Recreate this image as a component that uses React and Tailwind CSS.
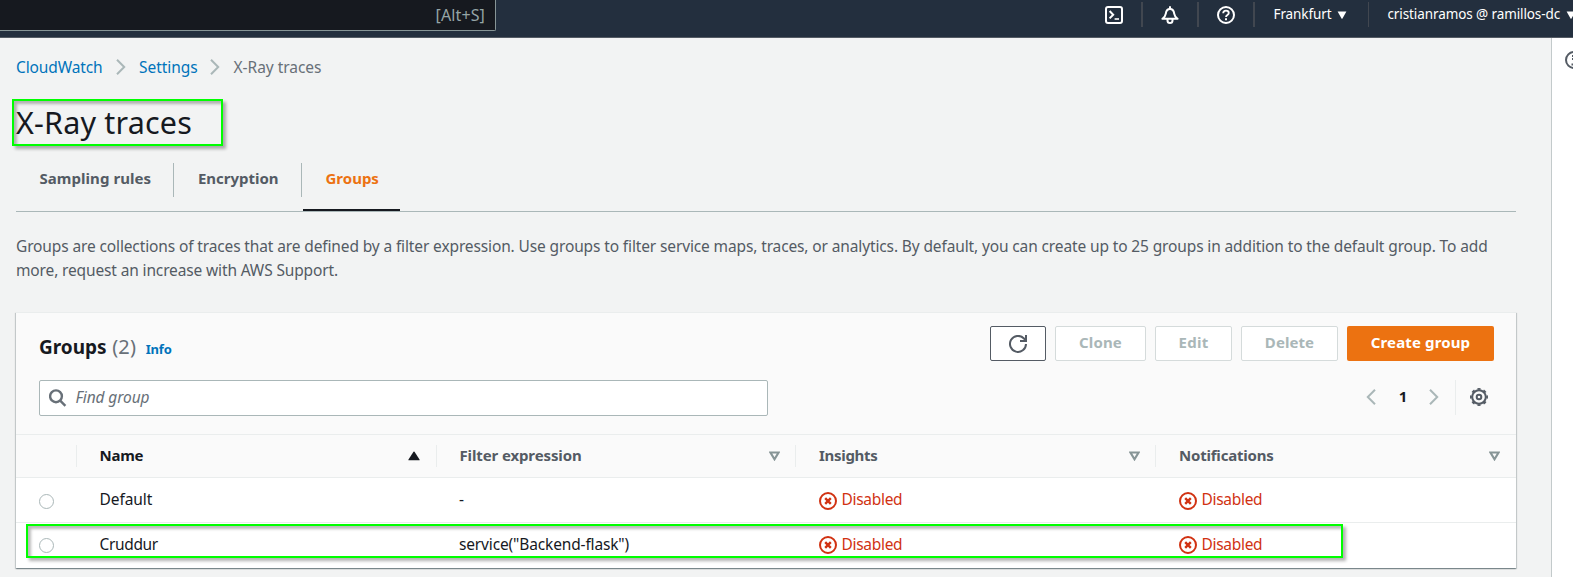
import React from 'react';

function Caret({ className = '' }) {
  return (
    <svg viewBox="0 0 10 8" className={`h-2 w-2.5 shrink-0 ${className}`}>
      <path d="M0.6 0.6h8.8L5.6 7.2a.7.7 0 0 1-1.2 0z" fill="#fff" />
    </svg>
  );
}

function Chevron({ left = false }) {
  return (
    <svg viewBox="0 0 10 16" className="h-4 w-2.5 shrink-0" fill="none" stroke="#aab7b8" strokeWidth="2">
      <path d={left ? 'M9 .8 1.8 8 9 15.2' : 'M1 .8 8.2 8 1 15.2'} />
    </svg>
  );
}

function NavDivider() {
  return <div className="h-[25px] w-[2px] bg-[#414750]" />;
}

function ErrorIcon() {
  return (
    <svg viewBox="0 0 18 18" className="h-[18px] w-[18px] shrink-0" fill="none" stroke="#d13212" strokeWidth="2">
      <circle cx="9" cy="9" r="8" />
      <path d="M6.2 6.2l5.6 5.6M11.8 6.2l-5.6 5.6" strokeWidth="2.4" />
    </svg>
  );
}

function SortIcon() {
  return (
    <svg viewBox="0 0 11 10" className="h-2.5 w-[11px] shrink-0" fill="none" stroke="#879596" strokeWidth="2.2">
      <path d="M1.4 1.5h8.2L5.5 8.2z" />
    </svg>
  );
}

function GearIcon({ className = '' }) {
  return (
    <svg viewBox="0 0 18 18" className={`h-[18px] w-[18px] ${className}`} fill="none" stroke="#545b64">
      <circle cx="9" cy="9" r="6.8" strokeWidth="2" />
      <circle cx="9" cy="9" r="8.1" strokeWidth="1.8" pathLength="80" strokeDasharray="5 5" strokeDashoffset="2.5" />
      <circle cx="9" cy="9" r="2.3" strokeWidth="2" />
    </svg>
  );
}

function TopNav() {
  return (
    <header className="flex h-[38px] items-start border-b border-[#545b64] bg-[#232f3e] text-white">
      <div className="flex h-[31px] w-[496px] shrink-0 items-center justify-end rounded-br-[2px] border-b border-r border-[#879596] bg-[#16191f] pr-[10px] text-[16px] tracking-[0.13px] text-[#95a5a6]">
        [Alt+S]
      </div>
      <div className="ml-[609px] flex items-start pt-[2px]">
        <svg viewBox="0 0 18 18" className="mr-[18px] mt-1 h-[18px] w-[18px]" fill="none" stroke="#fff" strokeWidth="2">
          <rect x="1" y="1" width="16" height="16" rx="2" />
          <path d="M4.6 5 8.2 8.7 4.6 12.4" />
          <path d="M9.6 13h4.4" strokeWidth="1.6" />
        </svg>
        <NavDivider />
        <svg viewBox="0 0 18 18" className="mx-[18px] mt-1 h-[18px] w-[18px]" fill="none" stroke="#fff" strokeWidth="2" strokeLinejoin="round">
          <path d="M1.4 12.8h15.2c-2.3-1.3-3-2.8-3.4-5.2C12.8 4.7 11.4 3 9 3S5.2 4.700 4.800 7.600c-.4 2.400-1.100 3.900-3.400 5.200z" />
          <path d="M9 .2V3M6.500 13v1.400a2.500 2.500 0 0 0 5 0V13" />
        </svg>
        <NavDivider />
        <svg viewBox="0 0 18 18" className="mx-[18px] mt-1 h-[18px] w-[18px]" fill="none" stroke="#fff" strokeWidth="2">
          <circle cx="9" cy="9" r="8" />
          <path d="M6.200 7.300C6.200 5.500 7.400 4.600 9 4.600s2.800 1 2.800 2.400c0 2-2.800 2-2.800 4" strokeWidth="1.800" />
          <path d="M9 12.300v2" />
        </svg>
        <NavDivider />
        <div className="ml-[18.500px] flex h-[24px] items-center text-[13.500px] tracking-[-0.100px]">
          Frankfurt
          <Caret className="ml-[6px] mt-px" />
        </div>
        <div className="ml-[21px] h-[25px] w-px bg-[#414750]" />
        <div className="ml-[18px] flex h-[24px] items-center whitespace-nowrap text-[13.500px] tracking-[-0.100px]">
          cristianramos @ ramillos-dc
          <Caret className="ml-[6px] mt-px" />
        </div>
      </div>
    </header>
  );
}

function Breadcrumbs() {
  return (
    <nav className="flex h-6 items-center text-[15.500px] text-[#0073bb]">
      <span className="w-[87px] pt-[2px] tracking-[-0.120px]">CloudWatch</span>
      <span className="mx-[13px] flex"><Chevron /></span>
      <span className="w-[58px] pt-[2px] tracking-[-0.060px]">Settings</span>
      <span className="mx-[13px] flex"><Chevron /></span>
      <span className="ml-[0.500px] pt-[2px] tracking-[-0.030px] text-[#687078]">X-Ray traces</span>
    </nav>
  );
}

function Tabs() {
  return (
    <div className="flex h-[49px] border-b border-[#aab7b8] text-[15px] font-bold text-[#545b64]">
      <div className="h-[34px] w-[158px] border-r border-[#aab7b8] pl-[23.500px] leading-[31px] tracking-[0.050px]">Sampling rules</div>
      <div className="h-[34px] w-[128px] border-r border-[#aab7b8] pl-[24px] leading-[31px] tracking-[-0.030px]">Encryption</div>
      <div className="ml-px h-[48px] w-[97px] border-b-2 border-[#16191f] pl-[22.500px] leading-[31px] text-[#ec7211]">Groups</div>
    </div>
  );
}

function GhostButton({ className, children }) {
  return (
    <button className={`flex h-[35px] items-center justify-center rounded-[2px] border border-[#d5dbdb] bg-white pb-[3px] text-[15px] font-bold text-[#aab7b8] ${className}`}>
      {children}
    </button>
  );
}

const COLS = 'grid grid-cols-[61px_360px_359px_360px_360px]';

function HeaderCell({ label, tracking, active = false, last = false }) {
  return (
    <div className={`flex h-[22px] items-center justify-between pl-[22.500px] ${last ? 'pr-4' : 'border-r border-[#eaeded] pr-[15px]'} ${active ? 'text-[#16191f]' : 'text-[#545b64]'}`}>
      <span className={`pb-[2px] ${tracking}`}>{label}</span>
      {active ? (
        <svg viewBox="0 0 12 10" className="mr-px h-2.5 w-3 shrink-0">
          <path d="M5.500.800a.6.6 0 0 1 1 0l5 7.600a.6.6 0 0 1-.5.900H1a.6.6 0 0 1-.5-.900z" fill="#16191f" />
        </svg>
      ) : (
        <SortIcon />
      )}
    </div>
  );
}

function Status() {
  return (
    <div className="flex items-center pl-[22.500px] tracking-[-0.300px] text-[#d13212]">
      <span className="mr-[5px] mt-px flex"><ErrorIcon /></span>
      <span>Disabled</span>
    </div>
  );
}

function Row({ name, nameTracking, filter, className }) {
  return (
    <div className={`${COLS} text-[15.500px] text-[#16191f] ${className}`}>
      <div className="flex items-center pl-[23px]">
        <span className="mt-[2px] h-[15px] w-[15px] rounded-full border border-[#aab7b8] bg-white" />
      </div>
      <div className={`flex items-center pl-[22.500px] ${nameTracking}`}>{name}</div>
      <div className="flex items-center pl-[22px] tracking-[-0.150px]">{filter}</div>
      <Status />
      <Status />
    </div>
  );
}

function GroupsPanel() {
  return (
    <section className="mt-[30px] h-[256px] w-[1500px] shrink-0 border-t border-[#eaeded] bg-white shadow-[0_1px_1px_0_rgba(0,28,36,0.3),1px_1px_1px_0_rgba(0,28,36,0.15),-1px_1px_1px_0_rgba(0,28,36,0.15)]">
      <div className="h-[122px] border-b border-[#eaeded] bg-[#fafafa] pl-[23px] pr-[22px] pt-[13px]">
        <div className="flex h-[35px]">
          <div className="flex flex-1 items-baseline pt-[7px] leading-[28px]">
            <h2 className="text-[19px] font-bold text-[#16191f]">Groups</h2>
            <span className="ml-[5.500px] text-[20px] tracking-[0.190px] text-[#687078]">(2)</span>
            <span className="ml-[9.500px] text-[13px] font-bold tracking-[-0.170px] text-[#0073bb]">Info</span>
          </div>
          <div className="flex gap-[9px]">
            <button className="flex h-[35px] w-[56px] items-center justify-center rounded-[2px] border border-[#545b64] bg-white">
              <svg viewBox="0 0 18 18" className="h-[18px] w-[18px]" fill="none" stroke="#545b64" strokeWidth="2">
                <path d="M17 9a8 8 0 1 1-2.300-5.700L17 5.600" />
                <path d="M17 0v6h-6" />
              </svg>
            </button>
            <GhostButton className="w-[91px] tracking-[0.160px]">Clone</GhostButton>
            <GhostButton className="w-[77px] tracking-[0.280px]">Edit</GhostButton>
            <GhostButton className="w-[97px] tracking-[0.080px]">Delete</GhostButton>
            <button className="h-[35px] w-[147px] rounded-[2px] bg-[#ec7211] pb-[3px] text-[15px] font-bold tracking-[0.140px] text-white">Create group</button>
          </div>
        </div>
        <div className="mt-[19px] flex h-9 items-center">
          <div className="flex h-9 w-[729px] items-center rounded-[2px] border border-[#aab7b8] bg-white pl-[9px]">
            <svg viewBox="0 0 18 18" className="h-[18px] w-[18px]" fill="none" stroke="#687078" strokeWidth="2.400">
              <circle cx="7" cy="7.300" r="5.900" />
              <path d="M11.200 11.600 16.400 16.800" />
            </svg>
            <span className="ml-[8.500px] pb-px text-[15.500px] italic tracking-[-0.100px] text-[#687078]">Find group</span>
          </div>
          <div className="mb-[2px] ml-auto flex items-center">
            <Chevron left />
            <span className="w-[53px] pb-[2px] pl-px text-center text-[15px] font-bold text-[#16191f]">1</span>
            <Chevron />
            <span className="ml-4 h-[35px] w-px bg-[#eaeded]" />
            <GearIcon className="ml-[14px] mr-[6px]" />
          </div>
        </div>
      </div>
      <div className={`${COLS} h-[43px] items-center border-b border-[#eaeded] bg-[#fafafa] text-[15px] font-bold`}>
        <div className="h-[22px] border-r border-[#eaeded]" />
        <HeaderCell label="Name" tracking="tracking-[-0.250px]" active />
        <HeaderCell label="Filter expression" tracking="tracking-[-0.120px]" />
        <HeaderCell label="Insights" tracking="tracking-[-0.300px] pl-[0.500px]" />
        <HeaderCell label="Notifications" tracking="tracking-[-0.200px] pl-[0.500px]" last />
      </div>
      <Row name="Default" nameTracking="tracking-[-0.060px]" filter="-" className="h-[45px] border-b border-[#eaeded]" />
      <Row name="Cruddur" nameTracking="tracking-[-0.350px]" filter={'service("Backend-flask")'} className="h-[43px]" />
    </section>
  );
}

const MARK =
  'pointer-events-none absolute border-2 border-[#00ff00] shadow-[3px_3px_3px_rgba(0,0,0,0.3),inset_3px_3px_3px_rgba(0,0,0,0.27)]';

export default function App() {
  return (
    <div className="relative flex h-[577px] w-[1573px] flex-col overflow-hidden bg-[#f2f3f3] font-['Noto_Sans','Open_Sans',sans-serif]">
      <TopNav />
      <div className="flex flex-1">
        <main className="w-[1551px] shrink-0 pl-4 pt-[17px]">
          <Breadcrumbs />
          <h1 className="mt-[23px] h-[41px] text-[30.500px] leading-10 tracking-[0.180px] text-[#16191f]">X-Ray traces</h1>
          <div className="mt-5 w-[1500px]">
            <Tabs />
          </div>
          <p className="mt-[22px] w-[1500px] text-[15.500px] leading-6 text-[#545b64]">
            <span className="block whitespace-nowrap tracking-[-0.130px]">
              Groups are collections of traces that are defined by a filter expression. Use groups to filter service maps, traces, or analytics. By default, you can create up to 25 groups in addition to the default group. To add
            </span>
            <span className="block tracking-[-0.140px]">more, request an increase with AWS Support.</span>
          </p>
          <GroupsPanel />
        </main>
        <aside className="flex-1 overflow-hidden border-l border-[#c3cacb] bg-white pl-[13px] pt-[13px]">
          <svg viewBox="0 0 18 18" className="h-[18px] w-[18px] max-w-none" fill="none" stroke="#545b64" strokeWidth="2">
            <circle cx="9" cy="9" r="8" />
            <path d="M7 8h2.500v5M6.500 13.500h5M7 5h2.500" />
          </svg>
        </aside>
      </div>
      <div className={`${MARK} left-[12px] top-[99px] h-[47px] w-[211px]`} />
      <div className={`${MARK} left-[26px] top-[524px] h-[34px] w-[1317px]`} />
    </div>
  );
}
